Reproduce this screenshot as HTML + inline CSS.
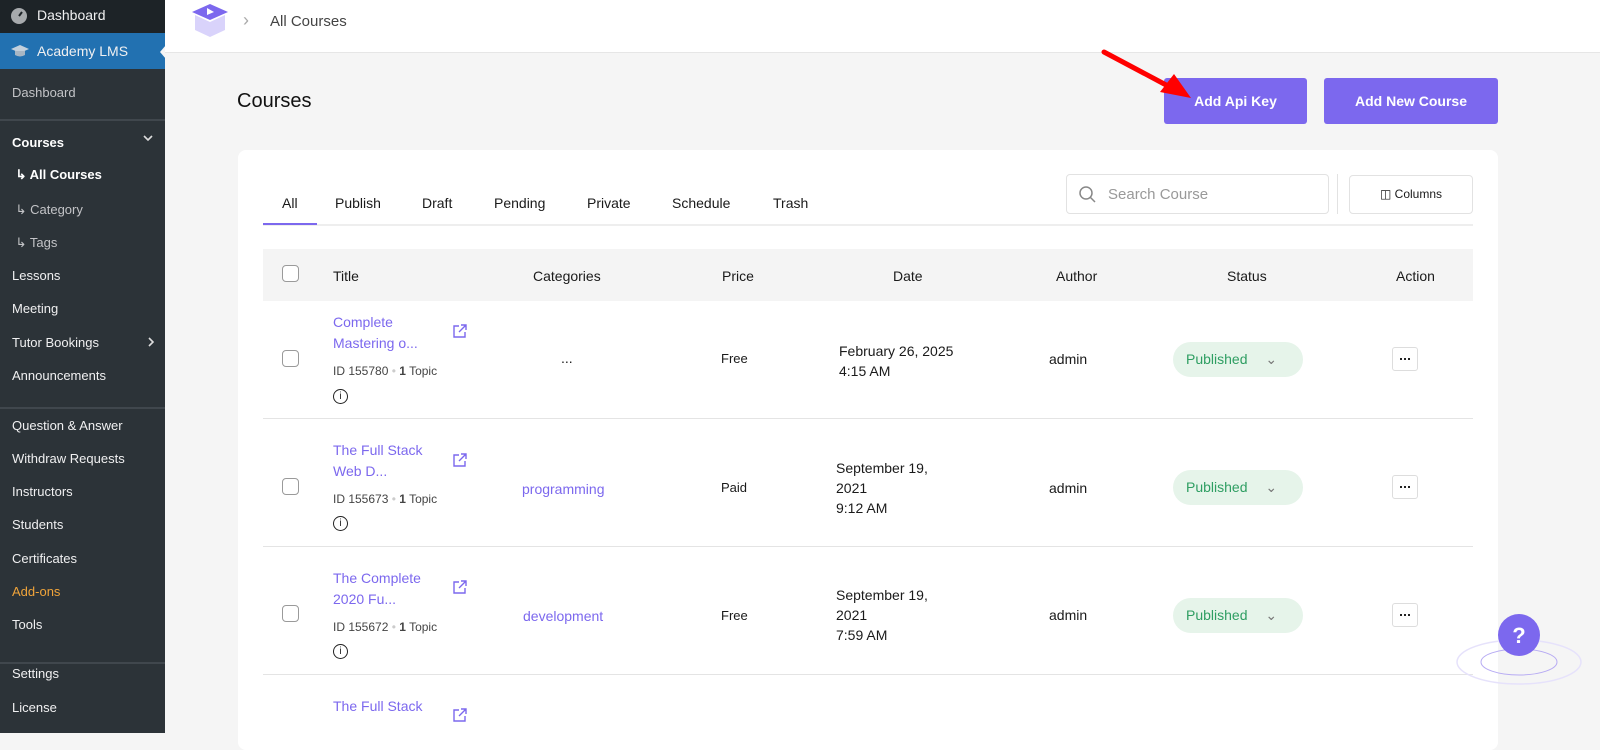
<!DOCTYPE html>
<html><head><meta charset="utf-8"><style>
*{margin:0;padding:0;box-sizing:border-box}
body{width:1600px;height:733px;overflow:hidden;background:#f5f5f5;font-family:"Liberation Sans",sans-serif;position:relative;color:#1a1a1a}
.a{position:absolute;white-space:nowrap}
#sb{position:absolute;left:0;top:0;width:165px;height:733px;background:#2c3338}
.si{position:absolute;left:12px;font-size:13px;color:#f0f0f1}
.sep{position:absolute;left:0;width:165px;height:2px;background:#40474d}
.t14{font-size:14px}
.cb{position:absolute;left:282px;width:17px;height:17px;border:1.5px solid #9a9a9a;border-radius:4px;background:#fff}
.link{color:#7c68ee;font-size:14px;line-height:21px}
.meta{font-size:12px;color:#444}
.pub{position:absolute;left:1173px;width:130px;height:35px;border-radius:18px;background:#e6f4ea;color:#2e9e62;font-size:14px;padding:9px 0 0 13px}
.dots{position:absolute;left:1392px;width:26px;height:24px;border:1px solid #ddd;border-radius:3px;background:#fff}
.dots:after{content:"";position:absolute;left:7px;top:10px;width:2px;height:2px;background:#222;box-shadow:4px 0 #222,8px 0 #222}
.row{position:absolute;left:263px;width:1210px;height:1px;background:#e4e4e4}
</style></head><body>
<div id="sb">
<div style="position:absolute;left:0;top:0;width:165px;height:33px;background:#1d2327"></div>
<svg class="a" style="left:10px;top:7px" width="18" height="18" viewBox="0 0 18 18"><circle cx="9" cy="9" r="8" fill="#a7aaad"/><path d="M9 9 L12 5" stroke="#1d2327" stroke-width="2"/></svg>
<div class="si" style="left:37px;top:7px;font-size:14px">Dashboard</div>
<div style="position:absolute;left:0;top:33px;width:165px;height:36px;background:#2271b1"></div>
<svg class="a" style="left:10px;top:43px" width="20" height="16" viewBox="0 0 20 16"><path d="M1 6 L10 2 L19 6 L10 10Z" fill="#c3d0dc"/><path d="M5 8 V12 Q10 15 15 12 V8" fill="#a7b6c4"/></svg>
<div class="si" style="left:37px;top:43px;font-size:14px">Academy LMS</div>
<div style="position:absolute;left:160px;top:45px;width:0;height:0;border-top:7px solid transparent;border-bottom:7px solid transparent;border-right:6px solid #f5f5f5"></div>
<div class="si" style="top:85px;color:#c3c4c7">Dashboard</div>
<div class="sep" style="top:119px"></div>
<div class="si" style="top:135px;font-weight:bold;color:#fff">Courses</div>
<svg class="a" style="left:143px;top:134px" width="10" height="8" viewBox="0 0 10 8"><path d="M1 2 L5 6 L9 2" fill="none" stroke="#ddd" stroke-width="1.6"/></svg>
<div class="si" style="top:167px;font-weight:bold;color:#fff">&nbsp;↳ All Courses</div>
<div class="si" style="top:202px;color:#c3c4c7">&nbsp;↳ Category</div>
<div class="si" style="top:235px;color:#c3c4c7">&nbsp;↳ Tags</div>
<div class="si" style="top:268px">Lessons</div>
<div class="si" style="top:301px">Meeting</div>
<div class="si" style="top:335px">Tutor Bookings</div>
<svg class="a" style="left:147px;top:337px" width="8" height="10" viewBox="0 0 8 10"><path d="M2 1 L6 5 L2 9" fill="none" stroke="#ddd" stroke-width="1.6"/></svg>
<div class="si" style="top:368px">Announcements</div>
<div class="sep" style="top:407px"></div>
<div class="si" style="top:418px">Question &amp; Answer</div>
<div class="si" style="top:451px">Withdraw Requests</div>
<div class="si" style="top:484px">Instructors</div>
<div class="si" style="top:517px">Students</div>
<div class="si" style="top:551px">Certificates</div>
<div class="si" style="top:584px;color:#f0a43a">Add-ons</div>
<div class="si" style="top:617px">Tools</div>
<div class="sep" style="top:662px"></div>
<div class="si" style="top:666px">Settings</div>
<div class="si" style="top:700px">License</div>
</div>

<div style="position:absolute;left:165px;top:0;width:1435px;height:53px;background:#fff;border-bottom:1px solid #e6e6e6"></div>
<svg class="a" style="left:190px;top:2px" width="40" height="36" viewBox="0 0 40 36"><path d="M2 10 L20 2 L38 10 L20 18Z" fill="#7c68ee"/><path d="M5 13 L20 20 L35 13 V28 L20 35 L5 28Z" fill="#d9d3fb"/><path d="M17 6 L24 10 L17 13Z" fill="#fff"/></svg>
<div class="a" style="left:243px;top:10px;color:#aaa;font-size:18px">›</div>
<div class="a" style="left:270px;top:13px;font-size:15px;color:#444">All Courses</div>

<div class="a" style="left:237px;top:90px;font-size:20px;color:#111">Courses</div>
<div class="a" style="left:1164px;top:78px;width:143px;height:46px;background:#7c68ee;border-radius:3px;color:#fff;font-size:14px;font-weight:bold;text-align:center;line-height:46px">Add Api Key</div>
<div class="a" style="left:1324px;top:78px;width:174px;height:46px;background:#7c68ee;border-radius:3px;color:#fff;font-size:14px;font-weight:bold;text-align:center;line-height:46px">Add New Course</div>
<svg class="a" style="left:1098px;top:46px" width="100" height="60" viewBox="0 0 100 60"><line x1="6" y1="6" x2="70" y2="40" stroke="#f00" stroke-width="5" stroke-linecap="round"/><path d="M93 52 L62 46 L76 28Z" fill="#f00"/></svg>

<div style="position:absolute;left:238px;top:150px;width:1260px;height:600px;background:#fff;border-radius:8px"></div>
<div class="a t14" style="left:282px;top:195px">All</div>
<div class="a t14" style="left:335px;top:195px">Publish</div>
<div class="a t14" style="left:422px;top:195px">Draft</div>
<div class="a t14" style="left:494px;top:195px">Pending</div>
<div class="a t14" style="left:587px;top:195px">Private</div>
<div class="a t14" style="left:672px;top:195px">Schedule</div>
<div class="a t14" style="left:773px;top:195px">Trash</div>
<div class="a" style="left:263px;top:224px;width:1210px;height:2px;background:#eee"></div>
<div class="a" style="left:263px;top:223px;width:54px;height:2px;background:#7c68ee"></div>
<div class="a" style="left:1066px;top:174px;width:263px;height:40px;border:1px solid #e2e2e2;border-radius:4px"></div>
<svg class="a" style="left:1078px;top:185px" width="20" height="20" viewBox="0 0 20 20"><circle cx="8" cy="8" r="6" fill="none" stroke="#888" stroke-width="1.5"/><line x1="12.5" y1="12.5" x2="17" y2="17" stroke="#888" stroke-width="1.5"/></svg>
<div class="a" style="left:1108px;top:186px;font-size:15px;color:#999">Search Course</div>
<div class="a" style="left:1337px;top:174px;width:1px;height:40px;background:#e2e2e2"></div>
<div class="a" style="left:1349px;top:175px;width:124px;height:39px;border:1px solid #e2e2e2;border-radius:4px;font-size:12px;text-align:center;line-height:37px">&#9707; Columns</div>

<div class="a" style="left:263px;top:249px;width:1210px;height:52px;background:#f4f4f4"></div>
<div class="cb" style="top:265px"></div>
<div class="a t14" style="left:333px;top:268px">Title</div>
<div class="a t14" style="left:533px;top:268px">Categories</div>
<div class="a t14" style="left:722px;top:268px">Price</div>
<div class="a t14" style="left:893px;top:268px">Date</div>
<div class="a t14" style="left:1056px;top:268px">Author</div>
<div class="a t14" style="left:1227px;top:268px">Status</div>
<div class="a t14" style="left:1396px;top:268px">Action</div>

<!-- row1 -->
<div class="cb" style="top:350px"></div>
<div class="a link" style="left:333px;top:312px">Complete<br>Mastering o...</div>
<div class="a meta" style="left:333px;top:364px">ID 155780 <span style="color:#ccc">•</span> <b>1</b> Topic</div>
<div class="a" style="left:333px;top:389px;width:15px;height:15px;border:1.3px solid #222;border-radius:50%;font-size:10px;text-align:center;line-height:13px">i</div>
<div class="a t14" style="left:561px;top:350px">...</div>
<div class="a" style="left:721px;top:351px;font-size:13px">Free</div>
<div class="a t14" style="left:839px;top:341px;line-height:20px">February 26, 2025<br>4:15 AM</div>
<div class="a t14" style="left:1049px;top:351px">admin</div>
<div class="pub" style="top:342px">Published <span style="margin-left:14px;color:#777">&#8964;</span></div>
<div class="dots" style="top:347px"></div>
<div class="row" style="top:418px"></div>
<!-- row2 -->
<div class="cb" style="top:478px"></div>
<div class="a link" style="left:333px;top:440px">The Full Stack<br>Web D...</div>
<div class="a meta" style="left:333px;top:492px">ID 155673 <span style="color:#ccc">•</span> <b>1</b> Topic</div>
<div class="a" style="left:333px;top:516px;width:15px;height:15px;border:1.3px solid #222;border-radius:50%;font-size:10px;text-align:center;line-height:13px">i</div>
<div class="a link" style="left:522px;top:479px">programming</div>
<div class="a" style="left:721px;top:480px;font-size:13px">Paid</div>
<div class="a t14" style="left:836px;top:458px;line-height:20px">September 19,<br>2021<br>9:12 AM</div>
<div class="a t14" style="left:1049px;top:480px">admin</div>
<div class="pub" style="top:470px">Published <span style="margin-left:14px;color:#777">&#8964;</span></div>
<div class="dots" style="top:475px"></div>
<div class="row" style="top:546px"></div>
<!-- row3 -->
<div class="cb" style="top:605px"></div>
<div class="a link" style="left:333px;top:568px">The Complete<br>2020 Fu...</div>
<div class="a meta" style="left:333px;top:620px">ID 155672 <span style="color:#ccc">•</span> <b>1</b> Topic</div>
<div class="a" style="left:333px;top:644px;width:15px;height:15px;border:1.3px solid #222;border-radius:50%;font-size:10px;text-align:center;line-height:13px">i</div>
<div class="a link" style="left:523px;top:606px">development</div>
<div class="a" style="left:721px;top:608px;font-size:13px">Free</div>
<div class="a t14" style="left:836px;top:585px;line-height:20px">September 19,<br>2021<br>7:59 AM</div>
<div class="a t14" style="left:1049px;top:607px">admin</div>
<div class="pub" style="top:598px">Published <span style="margin-left:14px;color:#777">&#8964;</span></div>
<div class="dots" style="top:603px"></div>
<div class="row" style="top:674px"></div>
<!-- row4 -->
<div class="a link" style="left:333px;top:696px">The Full Stack</div>
<svg class="a" style="left:452px;top:707px" width="16" height="16" viewBox="0 0 16 16"><path d="M7 3H2v11h11V9M9 2h5v5M14 2 7 9" fill="none" stroke="#7c68ee" stroke-width="1.4"/></svg>
<svg class="a" style="left:452px;top:323px" width="16" height="16" viewBox="0 0 16 16"><path d="M7 3H2v11h11V9M9 2h5v5M14 2 7 9" fill="none" stroke="#7c68ee" stroke-width="1.4"/></svg>
<svg class="a" style="left:452px;top:452px" width="16" height="16" viewBox="0 0 16 16"><path d="M7 3H2v11h11V9M9 2h5v5M14 2 7 9" fill="none" stroke="#7c68ee" stroke-width="1.4"/></svg>
<svg class="a" style="left:452px;top:579px" width="16" height="16" viewBox="0 0 16 16"><path d="M7 3H2v11h11V9M9 2h5v5M14 2 7 9" fill="none" stroke="#7c68ee" stroke-width="1.4"/></svg>

<svg class="a" style="left:1455px;top:612px" width="145" height="80" viewBox="0 0 145 80"><ellipse cx="64" cy="50" rx="62" ry="22" fill="none" stroke="#e6e2fb" stroke-width="1.5"/><ellipse cx="64" cy="50" rx="38" ry="13" fill="none" stroke="#b7abf3" stroke-width="1"/><circle cx="64" cy="23" r="21" fill="#7c68ee"/><text x="64" y="31" text-anchor="middle" fill="#fff" font-size="22" font-weight="bold" font-family="Liberation Sans">?</text></svg>
</body></html>
